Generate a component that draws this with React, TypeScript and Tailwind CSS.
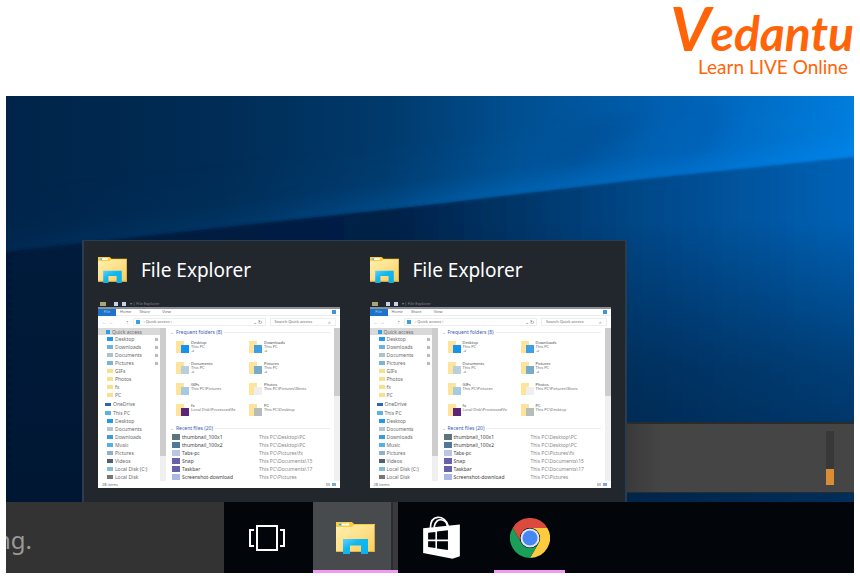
interface FolderTile {
  name: string
  place: string
  pin?: string
  badge: string
}

const sidebarTop = [
  { label: 'Desktop', color: 'bg-[#1e9bf0]', pinned: true },
  { label: 'Downloads', color: 'bg-[#6fb3dc]', pinned: true },
  { label: 'Documents', color: 'bg-[#a9c3d6]', pinned: true },
  { label: 'Pictures', color: 'bg-[#7fb2d8]', pinned: true },
  { label: 'GIFs', color: 'bg-[#fbe08c]', pinned: false },
  { label: 'Photos', color: 'bg-[#fbe08c]', pinned: false },
  { label: 'fx', color: 'bg-[#fbe08c]', pinned: false },
  { label: 'PC', color: 'bg-[#fbe08c]', pinned: false },
]

const sidebarPc = [
  { label: 'Desktop', color: 'bg-[#1e9bf0]' },
  { label: 'Documents', color: 'bg-[#b4c6d3]' },
  { label: 'Downloads', color: 'bg-[#3b9be0]' },
  { label: 'Music', color: 'bg-[#4fb0ea]' },
  { label: 'Pictures', color: 'bg-[#8fb0c8]' },
  { label: 'Videos', color: 'bg-[#51606e]' },
  { label: 'Local Disk (C:)', color: 'bg-[#7fc0cf]' },
  { label: 'Local Disk', color: 'bg-[#777777]' },
]

const tiles: FolderTile[] = [
  { name: 'Desktop', place: 'This PC', pin: '⊿', badge: 'bg-[#1592ee]' },
  { name: 'Downloads', place: 'This PC', pin: '⊿', badge: 'bg-[#3f9fe4]' },
  { name: 'Documents', place: 'This PC', pin: '⊿', badge: 'bg-[#b9d0da]' },
  { name: 'Pictures', place: 'This PC', pin: '⊿', badge: 'bg-[#78aacb]' },
  { name: 'GIFs', place: 'This PC\\Pictures', badge: 'bg-[#a5cbe0]' },
  { name: 'Photos', place: 'This PC\\Pictures\\Shots', badge: 'bg-[#eeeeee]' },
  { name: 'fx', place: 'Local Disk\\Processed\\fx', badge: 'bg-[#5b2678]' },
  { name: 'PC', place: 'This PC\\Desktop', badge: 'bg-[#b4bdb9]' },
]

const recentFiles = [
  { name: 'thumbnail_100x1', path: 'This PC\\Desktop\\PC', color: 'bg-[#5e7380]' },
  { name: 'thumbnail_100x2', path: 'This PC\\Desktop\\PC', color: 'bg-[#4f7898]' },
  { name: 'Tabs-pc', path: 'This PC\\Pictures\\fx', color: 'bg-[#b8c6e8]' },
  { name: 'Snap', path: 'This PC\\Documents\\15', color: 'bg-[#6661a8]' },
  { name: 'Taskbar', path: 'This PC\\Documents\\17', color: 'bg-[#6661a8]' },
  { name: 'Screenshot-download', path: 'This PC\\Pictures', color: 'bg-[#a9b9e6]' },
]

function FolderIcon({ className }: { className: string }) {
  return (
    <svg viewBox="0 0 39 32" preserveAspectRatio="none" className={className} aria-hidden="true">
      <defs>
        <linearGradient id="folder" x1="0" y1="0" x2="1" y2="1">
          <stop offset="0" stopColor="#fff0ad" />
          <stop offset="0.5" stopColor="#fee08a" />
          <stop offset="1" stopColor="#f7cd58" />
        </linearGradient>
        <linearGradient id="stand" x1="0" y1="0" x2="1" y2="1">
          <stop offset="0" stopColor="#5fcff8" />
          <stop offset="0.4" stopColor="#12b7f0" />
          <stop offset="1" stopColor="#08b0ec" />
        </linearGradient>
      </defs>
      <path d="M0 0h16l2 2h21v28H0z" fill="#f9cd3e" />
      <path d="M3 1.500h10v2H3z" fill="#fff" />
      <path d="M3 1.500h2.500v2H3z" fill="#18b5ea" />
      <path d="M0 5h16l2-2h21v27H0z" fill="url(#folder)" />
      <path d="M38 3h1v27h-1zM0 29.300h39v.7H0z" fill="#d5aa46" />
      <path d="M7 17h25v15h-7v-8.500H14V32H7z" fill="url(#stand)" />
    </svg>
  )
}

function TaskViewIcon() {
  return (
    <svg viewBox="0 0 36 26" className="h-[26px] w-9" fill="none" stroke="#fff" strokeWidth="2" aria-hidden="true">
      <path d="M8 1h20v24H8z" />
      <path d="M5 5H1v16h4M31 5h4v16h-4" />
    </svg>
  )
}

function StoreIcon() {
  return (
    <svg viewBox="0 0 111 130" className="h-[43px] w-[37px]" aria-hidden="true">
      <path d="M22 36C22 14 31 5 44 4s28 8 32 27" fill="none" stroke="#fff" strokeWidth="5" />
      <path d="M33 34C36 16 46 9 58 12c9 2 14 9 15 19" fill="none" stroke="#fff" strokeWidth="5" />
      <path d="M0 37 111 26v96l-22 7L0 112z" fill="#fff" />
      <path d="M15 51l22-3v23H15zM42 47l33-4v28H42zM15 76h22v21l-22-3zM42 76h33v27l-33-5z" fill="#02050a" />
    </svg>
  )
}

function ChromeIcon() {
  return (
    <svg viewBox="0 0 48 48" className="size-10" aria-hidden="true">
      <path d="M3.200 12A24 24 0 0 1 44.800 12H24A12 12 0 0 0 13.600 30z" fill="#dc4a3d" />
      <path d="M44.800 12A24 24 0 0 1 24 48l10.400-18A12 12 0 0 0 24 12z" fill="#fdcb3e" />
      <path d="M24 48A24 24 0 0 1 3.200 12l10.400 18a12 12 0 0 0 20.800 0z" fill="#1a9f5a" />
      <circle cx="24" cy="24" r="11.500" fill="#dfe5ec" />
      <circle cx="24" cy="24" r="9" fill="#4587f3" />
    </svg>
  )
}

function Wallpaper() {
  return (
    <svg viewBox="0 0 848 477" preserveAspectRatio="none" className="absolute inset-0 size-full" aria-hidden="true">
      <defs>
        <linearGradient id="sky">
          <stop offset="0" stopColor="#002449" />
          <stop offset="0.25" stopColor="#002c55" />
          <stop offset="0.45" stopColor="#003a6c" />
          <stop offset="0.6" stopColor="#004f90" />
          <stop offset="0.8" stopColor="#0062b5" />
          <stop offset="1" stopColor="#007ddd" />
        </linearGradient>
        <linearGradient id="beam" gradientUnits="userSpaceOnUse" x1="416" y1="40" x2="424" y2="112">
          <stop offset="0" stopColor="#0090ff" stopOpacity="0" />
          <stop offset="0.6" stopColor="#0090ff" stopOpacity="0.08" />
          <stop offset="1" stopColor="#0090ff" stopOpacity="0.4" />
        </linearGradient>
        <linearGradient id="fade">
          <stop offset="0" stopColor="#222" />
          <stop offset="0.3" stopColor="#444" />
          <stop offset="0.55" stopColor="#bbb" />
          <stop offset="1" stopColor="#fff" />
        </linearGradient>
        <mask id="fade-left">
          <path d="M0 0h848v477H0z" fill="url(#fade)" />
        </mask>
        <linearGradient id="ground">
          <stop offset="0" stopColor="#00193b" />
          <stop offset="0.45" stopColor="#002047" />
          <stop offset="0.6" stopColor="#003568" />
          <stop offset="0.75" stopColor="#004889" />
          <stop offset="1" stopColor="#0063b8" />
        </linearGradient>
        <linearGradient id="dusk" x1="0" y1="0" x2="0" y2="1">
          <stop offset="0.15" stopColor="#00152e" stopOpacity="0" />
          <stop offset="0.5" stopColor="#00152e" stopOpacity="0.45" />
          <stop offset="0.85" stopColor="#00152e" stopOpacity="0.7" />
        </linearGradient>
        <filter id="soft" x="-50%" y="-50%" width="200%" height="200%">
          <feGaussianBlur stdDeviation="12" />
        </filter>
        <filter id="edge">
          <feGaussianBlur stdDeviation="1.5" />
        </filter>
      </defs>
      <path d="M0 0h848v477H0z" fill="url(#sky)" />
      <path d="M530 66l50-36 60-10-20 20-50 30z" fill="#003a78" opacity="0.3" filter="url(#soft)" />
      <path d="M708 10q20 30-25 52l-30 8q50-30 40-60z" fill="#004794" opacity="0.25" filter="url(#soft)" />
      <g mask="url(#fade-left)">
        <path d="M0 0h848v61L640 83 424 109 212 132 0 156z" fill="url(#beam)" />
      </g>
      <g filter="url(#edge)">
        <path d="M-10 157 212 132 424 109 640 83 858 60v430H-10z" fill="url(#ground)" />
      </g>
      <path d="M0 156 424 109 848 61v416H0z" fill="url(#dusk)" />
    </svg>
  )
}

function TileIcon({ badge }: { badge: string }) {
  return (
    <div className="flex h-3 w-[13px] shrink-0 items-end justify-end bg-linear-to-r from-[#fde49a] from-60% to-transparent to-60%">
      <div className={`h-2 w-2 ${badge}`} />
    </div>
  )
}

function SectionTitle({ children }: { children: string }) {
  return (
    <div className="flex h-2 items-center gap-0.5 text-[#3a5bb0]">
      <span className="text-[#999999]">⌄</span>
      <h3 className="whitespace-nowrap">{children}</h3>
      <div className="h-px flex-1 bg-[#eeeeee]" />
    </div>
  )
}

function ExplorerWindow() {
  return (
    <div className="overflow-hidden whitespace-nowrap font-['Noto_Sans',sans-serif] text-[5px] leading-1 text-[#6b6b6b]">
      <div className="flex h-[7px] items-center gap-1 pl-0.5 text-[#85888c]">
        <span className="h-1 w-1.5 bg-[#a5a77a]" />
        <span className="ml-1 size-1 bg-[#c9d3e6]" />
        <span className="size-1 bg-[#c9d3e6]" />
        <span className="text-[4px]">▾ | File Explorer</span>
      </div>

      <div className="border-t-2 border-[#8b9096] bg-white">
        {/* Ribbon */}
        <div className="flex h-[7px] items-center border-b border-[#ececec] text-[4px]">
          <span className="flex h-[7px] w-[18px] items-center justify-center bg-[#1b74c9] text-[#a9d0f5]">File</span>
          <span className="ml-1">Home</span>
          <span className="ml-2">Share</span>
          <span className="ml-3">View</span>
          <span className="mr-1 ml-auto size-1 bg-[#3f93d6]" />
        </div>

        <div className="flex h-3 items-center gap-1 px-1">
          <span className="w-5 text-[#bbbbbb]">←  →</span>
          <span>↑</span>
          <div className="flex h-2 flex-1 items-center gap-1 border border-[#eeeeee] px-0.5">
            <span className="size-1 bg-[#35a3e0]" />
            <span className="text-[4px]">› Quick access ›</span>
            <span className="ml-auto">⌄ ↻</span>
          </div>
          <div className="flex h-2 w-[66px] items-center justify-between border border-[#eeeeee] px-1">
            <span className="text-[4px]">Search Quick access</span>
            <span>⌕</span>
          </div>
        </div>

        <div className="flex h-[153px] overflow-hidden">
          {/* Navigation pane */}
          <nav className="w-[62px]">
            <div className="flex h-[7px] items-center gap-0.5 bg-[#d9d9d9] pl-2">
              <span className="size-1 bg-[#2ca0e0]" />
              Quick access
            </div>
            {sidebarTop.map((item) => (
              <div key={item.label} className="flex h-2 items-center gap-0.5 pl-[9px]">
                <span className={`h-1 w-1.5 ${item.color}`} />
                {item.label}
                {item.pinned && <span className="mr-0.5 ml-auto h-[3px] w-[3px] bg-[#bbbbbb]" />}
              </div>
            ))}
            <div className="flex h-2.5 items-center gap-0.5 pl-[7px]">
              <span className="h-[3px] w-1.5 bg-[#2a62bd]" />
              OneDrive
            </div>
            <div className="flex h-2 items-center gap-0.5 pl-[7px]">
              <span className="h-1 w-1.5 bg-[#55b4e8]" />
              This PC
            </div>
            {sidebarPc.map((item) => (
              <div key={item.label} className="flex h-2 items-center gap-0.5 pl-[9px]">
                <span className={`h-1 w-1.5 ${item.color}`} />
                {item.label}
              </div>
            ))}
          </nav>
          <div className="w-1.5 bg-[#f0f0f0]">
            <div className="h-32 bg-[#cdcdcd]" />
          </div>

          {/* Content */}
          <div className="flex-1 overflow-hidden pr-1 pl-1">
            <SectionTitle>Frequent folders (8)</SectionTitle>
            <div className="grid grid-cols-[73px_1fr] pb-1 pl-1.5">
              {tiles.map((tile) => (
                <div key={tile.name} className="flex h-[21px] items-center gap-0.5">
                  <TileIcon badge={tile.badge} />
                  <div className="h-3 text-[4px]">
                    <div className="text-[#444444]">{tile.name}</div>
                    <div>{tile.place}</div>
                    <div>{tile.pin}</div>
                  </div>
                </div>
              ))}
            </div>
            <SectionTitle>Recent files (20)</SectionTitle>
            <div className="pt-px">
              {recentFiles.map((file) => (
                <div key={file.name} className="grid h-2 grid-cols-[10px_77px_1fr] items-center pl-0.5">
                  <span className={`h-1.5 w-2 ${file.color}`} />
                  <span className="text-[#444444]">{file.name}</span>
                  <span className="text-[#8a8a8a]">{file.path}</span>
                </div>
              ))}
            </div>
          </div>
          <div className="w-1.5 bg-[#f0f0f0]">
            <div className="h-[68px] bg-[#cdcdcd]" />
          </div>
        </div>

        <div className="flex h-[7px] items-center gap-0.5 px-1">
          <span className="text-[4px]">28 items</span>
          <span className="ml-auto h-[3px] w-1 bg-[#c9c9c9]" />
          <span className="h-[3px] w-1 bg-[#7fa9cf]" />
        </div>
      </div>
    </div>
  )
}

function WindowPreview() {
  return (
    <article>
      <div className="flex h-[26px] items-center gap-[14px]">
        <FolderIcon className="h-[26px] w-[29px]" />
        <h2 className="font-['Noto_Sans',sans-serif] text-[19px] leading-6 text-white">File Explorer</h2>
      </div>
      <div className="pt-[17px]">
        <ExplorerWindow />
      </div>
    </article>
  )
}

export default function App() {
  return (
    <div className="bg-white font-['Noto_Sans',sans-serif]">
      <header className="flex h-24 justify-end pr-1.5">
        <div className="flex flex-col items-end font-['Lato',sans-serif] text-[#ff6508]">
          <div className="h-[55px] text-[48px] leading-[54px] font-bold italic first-letter:text-[62px]">Vedantu</div>
          <div className="pr-1.5 text-[19px] leading-6">Learn LIVE Online</div>
        </div>
      </header>

      <main className="px-1.5 pb-2">
        <div className="relative isolate overflow-hidden">
          <Wallpaper />

          <div className="relative flex items-end pt-36 pl-[76px]">
            <section className="grid w-[545px] grid-cols-2 gap-x-[30px] border-x-2 border-t border-[#2b3c4e] bg-[#22272d] px-[14px] pt-4 pb-[14px]">
              <WindowPreview />
              <WindowPreview />
            </section>
            <aside className="mb-[9px] flex h-[71px] flex-1 items-center justify-end border-t-2 border-b border-[#2b2b2b] bg-linear-to-r from-[#3a3a3a] to-[#454545] to-15% pr-5">
              <div role="meter" aria-label="Level" aria-valuenow={30} className="flex h-[54px] w-2 flex-col justify-end bg-[#383838]">
                <div className="h-4 bg-[#dc8d34]" />
              </div>
            </aside>
          </div>

          <div className="relative flex h-[71px] bg-[#02050a]">
            <input
              type="text"
              aria-label="Search"
              placeholder="ng."
              className="w-[218px] bg-[#333333] pt-1 -indent-[10px] text-[24px] outline-none placeholder:text-[#999999]"
            />
            <button aria-label="Task View" className="flex w-[89px] items-center justify-center pr-1">
              <TaskViewIcon />
            </button>
            <button aria-label="File Explorer" className="flex w-[85px] border-b-3 border-[#f099f5] bg-[#3a3a3c]">
              <span className="flex h-full w-20 items-center justify-center border-r-2 border-[#2b2c2e] bg-[#484b4d] pt-1 pl-1.5">
                <FolderIcon className="h-8 w-[39px]" />
              </span>
            </button>
            <button aria-label="Store" className="flex w-24 items-center justify-center pr-2.5">
              <StoreIcon />
            </button>
            <button aria-label="Google Chrome" className="flex w-[71px] items-center justify-center border-b-3 border-[#f099f5] pt-1">
              <ChromeIcon />
            </button>
          </div>
        </div>
      </main>
    </div>
  )
}
